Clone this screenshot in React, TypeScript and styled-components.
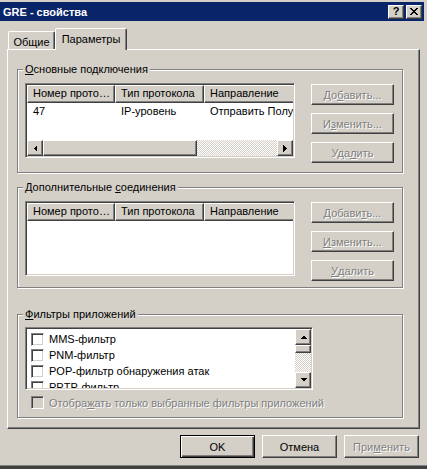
import React from "react";
import styled, { createGlobalStyle, css } from "styled-components";

const FACE = "#d4d0c8";
const SHADOW = "#808080";
const DARK = "#404040";

const GlobalStyle = createGlobalStyle`
  html, body { margin: 0; padding: 0; background: ${FACE}; overflow: hidden; }
  body { font-family: "Liberation Sans", Arial, sans-serif; font-size: 11px; color: #000; }
  * { box-sizing: border-box; }
`;

const raised = css`
  border: 1px solid;
  border-color: #fff ${DARK} ${DARK} #fff;
  box-shadow: inset -1px -1px 0 ${SHADOW};
  background: ${FACE};
`;

const sunken = css`
  border: 1px solid;
  border-color: ${SHADOW} #fff #fff ${SHADOW};
  box-shadow: inset 1px 1px 0 ${DARK}, inset -1px -1px 0 ${FACE};
`;

const Window = styled.div`
  width: 427px;
  height: 469px;
  display: flex;
  flex-direction: column;
  padding: 2px 3px 0 0;
  background: ${FACE};
  border-bottom: 3px solid ${DARK};
  box-shadow: inset 0 -1px 0 ${SHADOW};
`;

const TitleBar = styled.div`
  height: 19px;
  flex: none;
  display: flex;
  align-items: center;
  gap: 2px;
  padding: 0 2px 0 3px;
  background: #0a246a;
  color: #fff;
  font-weight: bold;
  font-size: 11px;
`;

const TitleText = styled.div`
  flex: 1;
  white-space: nowrap;
`;

const CaptionButton = styled.div`
  ${raised};
  width: 16px;
  height: 14px;
  display: flex;
  align-items: center;
  justify-content: center;
  color: #000;
  font-weight: bold;
  font-size: 11px;
  line-height: 12px;
  padding-bottom: 1px;
`;

const Body = styled.div`
  flex: 1;
  display: flex;
  flex-direction: column;
  padding: 7px 0 0 7px;
`;

const Tabs = styled.div`
  display: flex;
  align-items: flex-end;
  height: 22px;
  margin-bottom: -1px;
  position: relative;
  z-index: 1;
`;

const Tab = styled.div<{ $active?: boolean }>`
  display: flex;
  justify-content: center;
  align-items: flex-start;
  padding-top: 4px;
  line-height: 13px;
  background: ${FACE};
  border-left: 1px solid #fff;
  border-top: 1px solid #fff;
  border-right: 1px solid ${DARK};
  box-shadow: inset -1px 0 0 ${SHADOW};
  border-top-left-radius: 2px;
  border-top-right-radius: 2px;
  ${(p) =>
    p.$active
      ? css`
          width: 72px;
          height: 22px;
        `
      : css`
          width: 47px;
          height: 18px;
          margin-left: 1px;
          margin-bottom: 1px;
          padding-top: 4px;
        `}
`;

const Panel = styled.div`
  width: 413px;
  height: 380px;
  display: flex;
  flex-direction: column;
  padding: 19px 0 0 9px;
  border: 1px solid;
  border-color: #fff ${DARK} ${DARK} #fff;
  box-shadow: inset -1px -1px 0 ${SHADOW};
`;

const Group = styled.div<{ $h: number; $mt?: number }>`
  width: 386px;
  height: ${(p) => p.$h}px;
  margin-top: ${(p) => p.$mt ?? 0}px;
  display: flex;
  flex-direction: column;
  border: 1px solid ${SHADOW};
  box-shadow: 1px 1px 0 #fff, inset 1px 1px 0 #fff;
`;

const Legend = styled.div`
  align-self: flex-start;
  height: 13px;
  line-height: 13px;
  margin: -7px 0 0 5px;
  padding: 0 2px;
  background: ${FACE};
  white-space: nowrap;
`;

const GroupRow = styled.div<{ $mt?: number }>`
  display: flex;
  align-items: flex-start;
  gap: 16px;
  margin-top: ${(p) => p.$mt ?? 7}px;
  padding-left: 7px;
`;

const ListBox = styled.div<{ $w: number; $h: number; $row?: boolean }>`
  ${sunken};
  width: ${(p) => p.$w}px;
  height: ${(p) => p.$h}px;
  padding: 1px;
  background: #fff;
  display: flex;
  flex-direction: ${(p) => (p.$row ? "row" : "column")};
  overflow: hidden;
`;

const HeaderRow = styled.div`
  display: flex;
  flex: none;
  height: 18px;
  overflow: hidden;
`;

const HeaderCell = styled.div<{ $w: number }>`
  ${raised};
  flex: none;
  width: ${(p) => p.$w}px;
  height: 18px;
  line-height: 15px;
  padding-left: 5px;
  white-space: nowrap;
  overflow: hidden;
`;

const DataRow = styled.div`
  display: flex;
  flex: none;
  height: 16px;
  line-height: 16px;
  overflow: hidden;
`;

const DataCell = styled.div<{ $w: number }>`
  flex: none;
  width: ${(p) => p.$w}px;
  padding-left: 6px;
  white-space: nowrap;
  overflow: hidden;
`;

const checker = css`
  background-color: ${FACE};
  background-image: conic-gradient(#fff 25%, ${FACE} 0 50%, #fff 0 75%, ${FACE} 0);
  background-size: 2px 2px;
`;

const HScroll = styled.div`
  margin-top: auto;
  display: flex;
  height: 16px;
  flex: none;
`;

const VScroll = styled.div`
  display: flex;
  flex-direction: column;
  width: 16px;
  flex: none;
`;

const ScrollButton = styled.div`
  ${raised};
  width: 16px;
  height: 16px;
  flex: none;
  display: flex;
  align-items: center;
  justify-content: center;
`;

const Thumb = styled.div<{ $size: number; $vertical?: boolean }>`
  ${raised};
  flex: none;
  ${(p) =>
    p.$vertical
      ? css`
          height: ${p.$size}px;
          width: 16px;
        `
      : css`
          width: ${p.$size}px;
          height: 16px;
        `}
`;

const Track = styled.div`
  flex: 1;
  ${checker};
`;

const ButtonColumn = styled.div<{ $mt?: number }>`
  display: flex;
  flex-direction: column;
  gap: 8px;
  margin-top: ${(p) => p.$mt ?? 0}px;
`;

const PushButton = styled.div<{ $w: number; $h: number; $disabled?: boolean; $default?: boolean }>`
  width: ${(p) => p.$w}px;
  height: ${(p) => p.$h}px;
  display: flex;
  align-items: center;
  justify-content: center;
  white-space: nowrap;
  ${(p) =>
    p.$default
      ? css`
          border: 1px solid #000;
          box-shadow: inset 1px 1px 0 #fff, inset -1px -1px 0 ${DARK}, inset -2px -2px 0 ${SHADOW};
          background: ${FACE};
        `
      : raised};
  ${(p) =>
    p.$disabled &&
    css`
      color: ${SHADOW};
      text-shadow: 1px 1px 0 #fff;
    `}
`;

const Items = styled.div`
  flex: 1;
  padding-top: 2px;
  overflow: hidden;
`;

const Item = styled.div`
  display: flex;
  align-items: center;
  gap: 5px;
  height: 16px;
  padding-left: 4px;
  white-space: nowrap;
`;

const Check = styled.div<{ $disabled?: boolean }>`
  ${sunken};
  width: 13px;
  height: 13px;
  flex: none;
  background: ${(p) => (p.$disabled ? FACE : "#fff")};
`;

const CheckRow = styled.div<{ $disabled?: boolean }>`
  display: flex;
  align-items: center;
  gap: 5px;
  margin-top: 6px;
  padding-left: 13px;
  white-space: nowrap;
  ${(p) =>
    p.$disabled &&
    css`
      color: ${SHADOW};
      text-shadow: 1px 1px 0 #fff;
    `}
`;

const Footer = styled.div`
  display: flex;
  justify-content: flex-end;
  gap: 7px;
  margin-top: 6px;
  padding-right: 5px;
`;

const Key = styled.u``;

const Arrow = ({ dir }: { dir: "up" | "down" | "left" | "right" }) => {
  const vertical = dir === "up" || dir === "down";
  const w = vertical ? 7 : 4;
  const h = vertical ? 4 : 7;
  const pts = {
    up: "0,4 7,4 3.5,0.5",
    down: "0,0 7,0 3.5,3.5",
    left: "4,0 4,7 0.5,3.5",
    right: "0,0 0,7 3.5,3.5",
  }[dir];
  return (
    <svg width={w} height={h} viewBox={`0 0 ${w} ${h}`} shapeRendering="crispEdges">
      <polygon points={pts} fill="#000" />
    </svg>
  );
};

const CloseGlyph = () => (
  <svg width="8" height="7" viewBox="0 0 8 7" shapeRendering="crispEdges">
    <path d="M0 0h2v1H0zM6 0h2v1H6zM1 1h2v1H1zM5 1h2v1H5zM2 2h4v1H2zM3 3h2v1H3zM2 4h4v1H2zM1 5h2v1H1zM5 5h2v1H5zM0 6h2v1H0zM6 6h2v1H6z" fill="#000" />
  </svg>
);

const columns = [
  { title: "Номер прото…", w: 88 },
  { title: "Тип протокола", w: 89 },
  { title: "Направление", w: 100 },
];

const ListHeader = () => (
  <HeaderRow>
    {columns.map((c) => (
      <HeaderCell key={c.title} $w={c.w}>
        {c.title}
      </HeaderCell>
    ))}
  </HeaderRow>
);

const filters = ["MMS-фильтр", "PNM-фильтр", "POP-фильтр обнаружения атак", "PPTP-фильтр"];

export default function App() {
  return (
    <>
      <GlobalStyle />
      <Window>
        <TitleBar>
          <TitleText>GRE - свойства</TitleText>
          <CaptionButton>?</CaptionButton>
          <CaptionButton>
            <CloseGlyph />
          </CaptionButton>
        </TitleBar>
        <Body>
          <Tabs>
            <Tab>Общие</Tab>
            <Tab $active>Параметры</Tab>
          </Tabs>
          <Panel>
            <Group $h={104}>
              <Legend>
                <Key>О</Key>сновные подключения
              </Legend>
              <GroupRow>
                <ListBox $w={270} $h={75}>
                  <ListHeader />
                  <DataRow>
                    <DataCell $w={88}>47</DataCell>
                    <DataCell $w={89}>IP-уровень</DataCell>
                    <DataCell $w={100}>Отправить Получить</DataCell>
                  </DataRow>
                  <HScroll>
                    <ScrollButton>
                      <Arrow dir="left" />
                    </ScrollButton>
                    <Thumb $size={154} />
                    <Track />
                    <ScrollButton>
                      <Arrow dir="right" />
                    </ScrollButton>
                  </HScroll>
                </ListBox>
                <ButtonColumn $mt={1}>
                  <PushButton $w={83} $h={21} $disabled>
                    До<Key>б</Key>авить...
                  </PushButton>
                  <PushButton $w={83} $h={21} $disabled>
                    И<Key>з</Key>менить...
                  </PushButton>
                  <PushButton $w={83} $h={21} $disabled>
                    Уда<Key>л</Key>ить
                  </PushButton>
                </ButtonColumn>
              </GroupRow>
            </Group>

            <Group $h={101} $mt={14}>
              <Legend>
                Дополнительные <Key>с</Key>оединения
              </Legend>
              <GroupRow>
                <ListBox $w={270} $h={75}>
                  <ListHeader />
                </ListBox>
                <ButtonColumn $mt={1}>
                  <PushButton $w={83} $h={21} $disabled>
                    Добави<Key>т</Key>ь...
                  </PushButton>
                  <PushButton $w={83} $h={21} $disabled>
                    <Key>И</Key>зменить...
                  </PushButton>
                  <PushButton $w={83} $h={21} $disabled>
                    <Key>У</Key>далить
                  </PushButton>
                </ButtonColumn>
              </GroupRow>
            </Group>

            <Group $h={104} $mt={26}>
              <Legend>
                <Key>Ф</Key>ильтры приложений
              </Legend>
              <GroupRow $mt={6}>
                <ListBox $w={288} $h={63} $row>
                  <Items>
                    {filters.map((f) => (
                      <Item key={f}>
                        <Check />
                        {f}
                      </Item>
                    ))}
                  </Items>
                  <VScroll>
                    <ScrollButton>
                      <Arrow dir="up" />
                    </ScrollButton>
                    <Thumb $vertical $size={8} />
                    <Track />
                    <ScrollButton>
                      <Arrow dir="down" />
                    </ScrollButton>
                  </VScroll>
                </ListBox>
              </GroupRow>
              <CheckRow $disabled>
                <Check $disabled />
                <span>
                  Отобра<Key>ж</Key>ать только выбранные фильтры приложений
                </span>
              </CheckRow>
            </Group>
          </Panel>
          <Footer>
            <PushButton $w={75} $h={23} $default>
              OK
            </PushButton>
            <PushButton $w={75} $h={23}>
              Отмена
            </PushButton>
            <PushButton $w={75} $h={23} $disabled>
              При<Key>м</Key>енить
            </PushButton>
          </Footer>
        </Body>
      </Window>
    </>
  );
}
